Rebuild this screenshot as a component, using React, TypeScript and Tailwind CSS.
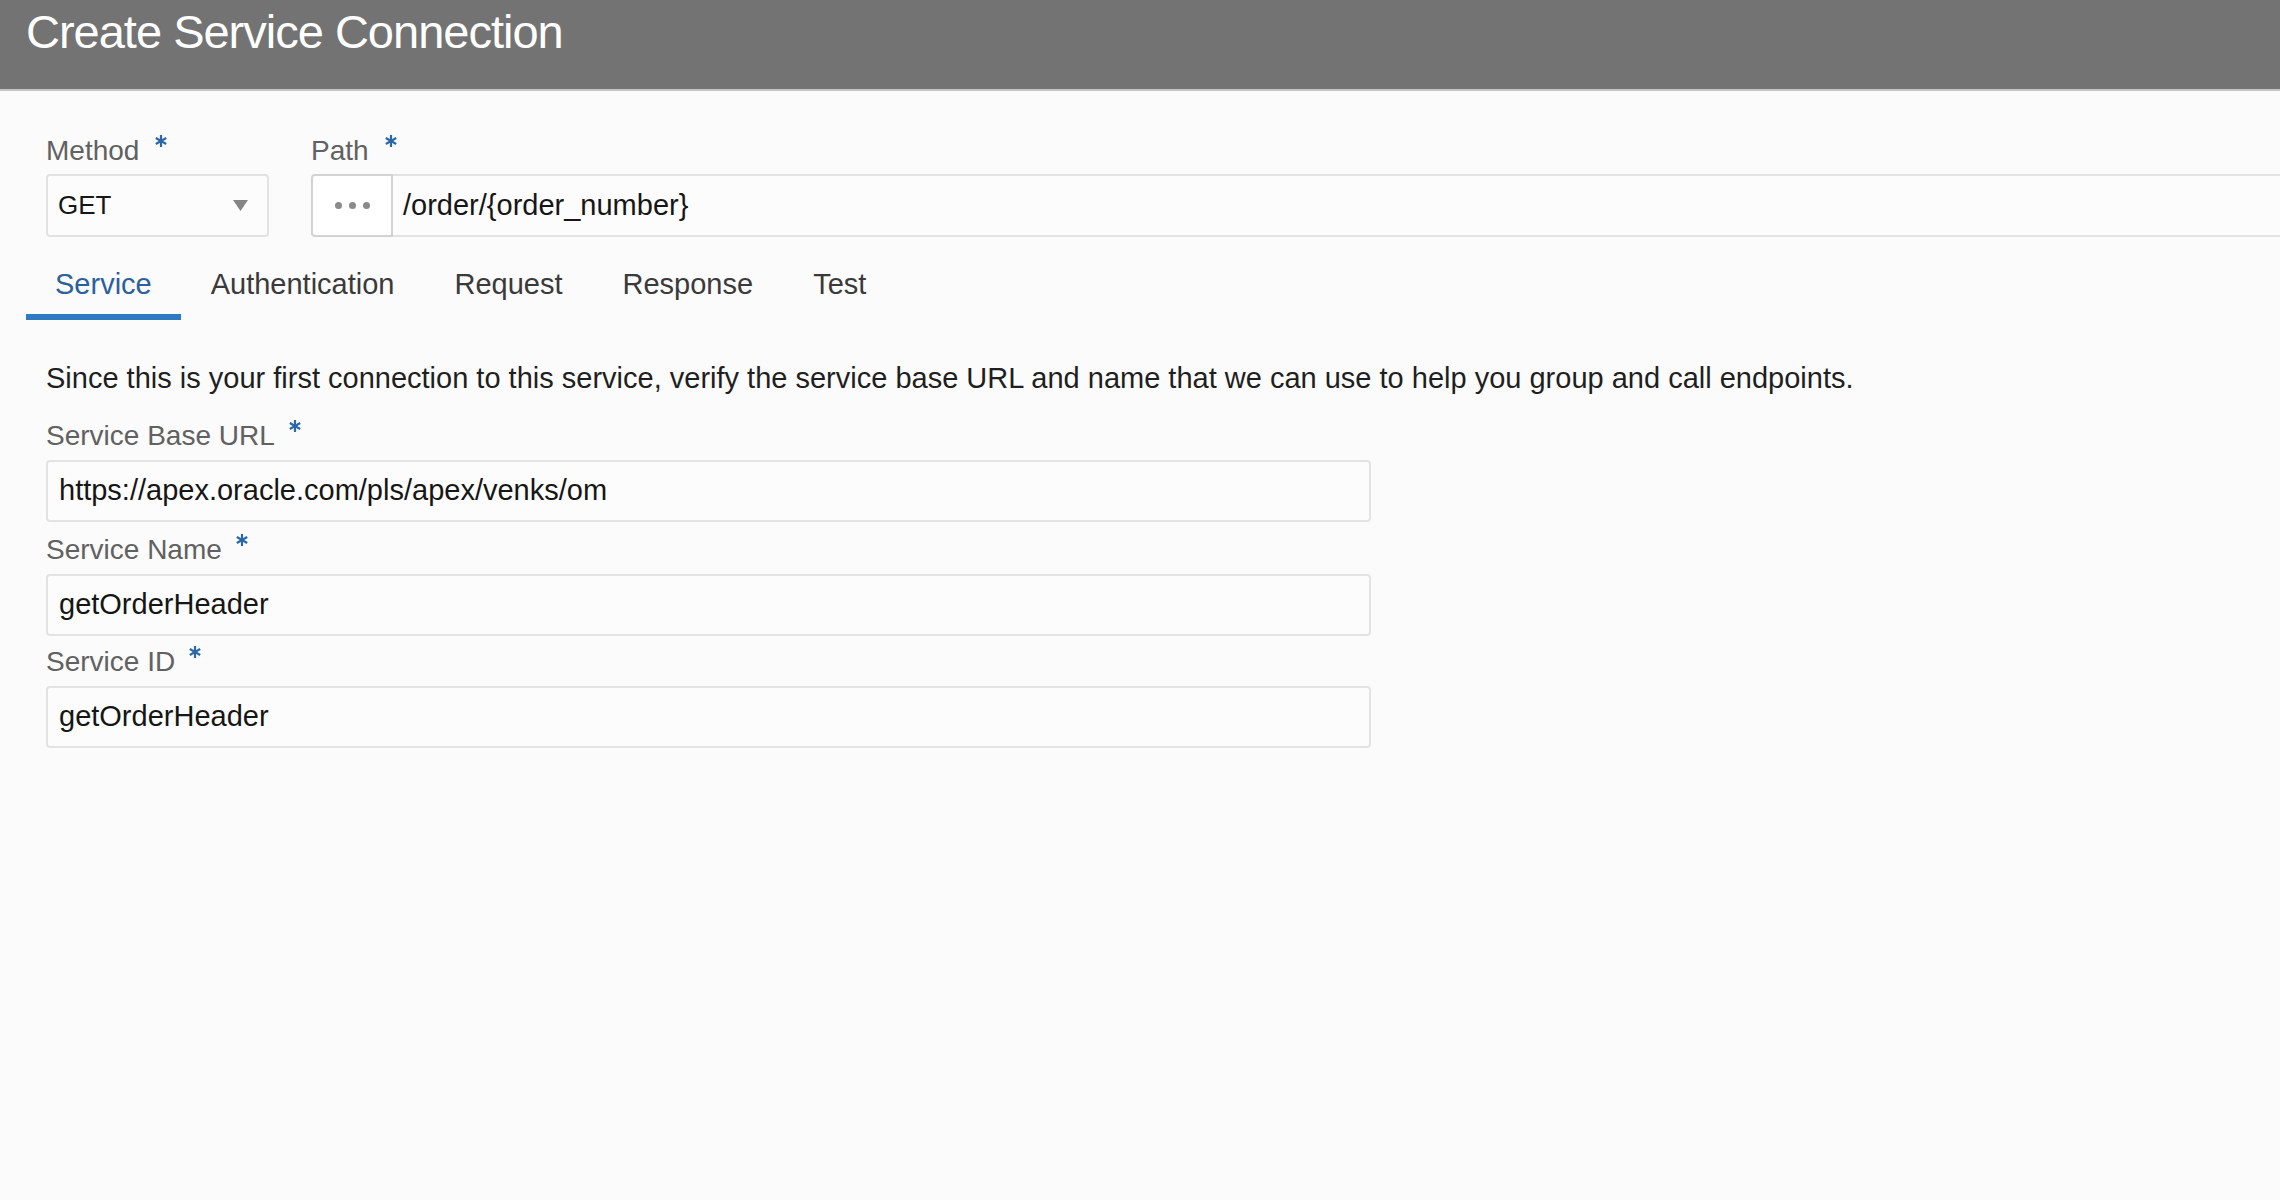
import React, { useState } from "react";

const font = { fontFamily: '"Liberation Sans", Arial, sans-serif' };

function Req() {
  return (
    <svg width="12" height="12" viewBox="0 0 12 12" className="mt-[2px] shrink-0" aria-hidden>
      <g stroke="#2b68a7" strokeWidth="2.2" strokeLinecap="butt">
        <line x1="6" y1="0" x2="6" y2="12" />
        <line x1="0.8" y1="3" x2="11.2" y2="9" />
        <line x1="0.8" y1="9" x2="11.2" y2="3" />
      </g>
    </svg>
  );
}

function FieldLabel({ text, gap }: { text: string; gap: string }) {
  return (
    <div className={`flex items-start h-[36px] ${gap}`}>
      <span className="text-[28px] leading-[36px] text-[#616161]">{text}</span>
      <Req />
    </div>
  );
}

function TextField({ label, value, gap, top }: { label: string; value: string; gap: string; top: string }) {
  return (
    <div className={`flex flex-col gap-[6px] ${top}`}>
      <FieldLabel text={label} gap={gap} />
      <div className="w-[1325px] h-[62px] border-2 border-[#e3e3e3] rounded-[4px] bg-[#fcfcfc] flex items-center pl-[11px]">
        <span className="text-[29px] text-[#161616]">{value}</span>
      </div>
    </div>
  );
}

const tabs = ["Service", "Authentication", "Request", "Response", "Test"];

export default function App() {
  const [active, setActive] = useState("Service");

  return (
    <div style={font} className="min-h-[1200px] w-full bg-[#fbfbfb]">
      <header className="h-[91px] bg-[#737373] border-b-2 border-[#c5c5c5] pl-[26px] pt-[4px]">
        <h1 className="text-[47px] leading-[56px] tracking-[-1px] text-white font-normal">
          Create Service Connection
        </h1>
      </header>

      <div className="flex items-start pl-[46px] pt-[42px]">
        <div className="flex flex-col gap-[5px]">
          <FieldLabel text="Method" gap="gap-[16px]" />
          <div className="w-[223px] h-[63px] border-2 border-[#e2e2e2] rounded-[4px] bg-[#fcfcfc] flex items-center justify-between pl-[10px] pr-[19px]">
            <span className="text-[26px] text-[#161616]">GET</span>
            <svg width="15" height="11" viewBox="0 0 15 11" aria-hidden>
              <polygon points="0,0 15,0 7.5,11" fill="#858585" />
            </svg>
          </div>
        </div>

        <div className="flex flex-col gap-[5px] ml-[42px] flex-1">
          <FieldLabel text="Path" gap="gap-[16px]" />
          <div className="flex h-[63px]">
            <button className="w-[82px] h-full border-2 border-[#d2d2d2] rounded-l-[4px] bg-white flex items-center justify-center gap-[7px]">
              <span className="w-[7px] h-[7px] rounded-full bg-[#8a8a8a]" />
              <span className="w-[7px] h-[7px] rounded-full bg-[#8a8a8a]" />
              <span className="w-[7px] h-[7px] rounded-full bg-[#8a8a8a]" />
            </button>
            <div className="flex-1 h-full border-y-2 border-[#e3e3e3] bg-[#fcfcfc] flex items-center pl-[10px]">
              <span className="text-[29px] text-[#161616]">/order/{"{order_number}"}</span>
            </div>
          </div>
        </div>
      </div>

      <nav className="flex pl-[26px]">
        {tabs.map((t) => (
          <button
            key={t}
            onClick={() => setActive(t)}
            className={
              t === active
                ? "px-[29px] pt-[29px] pb-[12px] border-b-[6px] border-[#2f7bc2] text-[29px] leading-[36px] text-[#2c5f9e]"
                : "px-[30px] pt-[29px] pb-[12px] border-b-[6px] border-transparent text-[29px] leading-[36px] text-[#3a3a3a]"
            }
          >
            {t}
          </button>
        ))}
      </nav>

      <div className="pl-[46px] flex flex-col">
        <p className="mt-[40px] text-[29px] leading-[36px] text-[#1f1f1f]">
          Since this is your first connection to this service, verify the service base URL and name that we can use to help you group and call endpoints.
        </p>
        <TextField label="Service Base URL" value="https://apex.oracle.com/pls/apex/venks/om" gap="gap-[14px]" top="mt-[22px]" />
        <TextField label="Service Name" value="getOrderHeader" gap="gap-[14px]" top="mt-[10px]" />
        <TextField label="Service ID" value="getOrderHeader" gap="gap-[14px]" top="mt-[8px]" />
      </div>
    </div>
  );
}
